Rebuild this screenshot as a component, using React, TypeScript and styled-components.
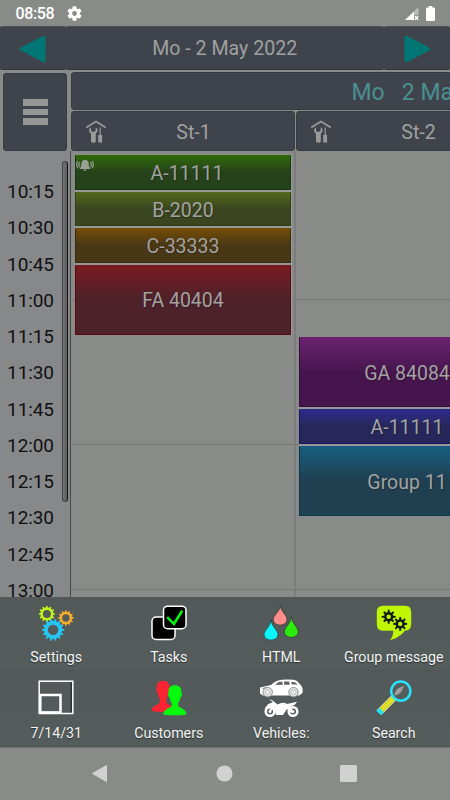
import React from "react";
import styled, { createGlobalStyle } from "styled-components";

const GlobalStyle = createGlobalStyle`
  * { box-sizing: border-box; }
  html, body { margin: 0; padding: 0; }
  body { font-family: Roboto, "Liberation Sans", sans-serif; background: #898b89; overflow: hidden; }
  svg { display: block; flex: none; }
`;

const Screen = styled.div`
  width: 450px;
  height: 800px;
  display: flex;
  flex-direction: column;
  overflow: hidden;
  background: #898b89;
`;

const StatusBar = styled.header`
  height: 26px;
  flex: none;
  display: flex;
  align-items: center;
  padding: 1px 15px 0 15.5px;
  color: #fff;
`;

const Clock = styled.span`
  width: 51px;
  font-size: 16px;
  font-weight: 500;
  letter-spacing: -0.35px;
  line-height: 18px;
`;

const StatusRight = styled.div`
  margin-left: auto;
  display: flex;
  align-items: center;
  gap: 7px;
`;

const DateBar = styled.nav`
  height: 44px;
  flex: none;
  display: grid;
  grid-template-columns: 65.5px 318.5px 1fr;
`;

const DateCell = styled.div`
  background: #3f444c;
  border-radius: 2px;
  border-top: 1px solid #4d5257;
  border-bottom: 1px solid #30343b;
  display: flex;
  align-items: center;
  justify-content: center;
  padding-top: 1px;
  color: #a0a0a0;
  font-size: 19.6px;
  line-height: 24px;
`;

const HeaderArea = styled.div`
  height: 81px;
  flex: none;
  display: flex;
  padding: 2px 0 0 3px;
`;

const MenuButton = styled.div`
  width: 64px;
  height: 78px;
  margin: 1px 4px 0 0;
  flex: none;
  display: flex;
  flex-direction: column;
  gap: 3px;
  align-items: center;
  justify-content: center;
  background: #3f444c;
  border: 1px solid #363a42;
  border-radius: 3px;
`;

const MenuBar = styled.span`
  width: 25px;
  height: 6.5px;
  background: #979797;
`;

const ColumnHeads = styled.div`
  width: 450px;
  flex: none;
  display: flex;
  flex-direction: column;
  gap: 1px;
`;

const DayHead = styled.div`
  height: 38px;
  display: flex;
  align-items: center;
  padding: 2px 0 0 279.5px;
  background: #3f444c;
  border: 1px solid #363a42;
  border-radius: 3px;
  color: #4b8f91;
  font-size: 23px;
  white-space: pre;
`;

const StationRow = styled.div`
  display: flex;
  gap: 1px;
`;

const StationHead = styled.div`
  width: 224px;
  height: 40px;
  display: flex;
  align-items: center;
  padding-left: 13px;
  background: #3f444c;
  border: 1px solid #363a42;
  border-radius: 3px;
  color: #a0a0a0;
  font-size: 19.600px;
`;

const StationName = styled.span`
  flex: 1;
  text-align: center;
  padding-right: 14px;
  padding-top: 2px;
`;

const Schedule = styled.main`
  height: 446px;
  flex: none;
  display: flex;
  overflow: hidden;
`;

const TimeColumn = styled.div`
  width: 61px;
  flex: none;
  padding-top: 23px;
  background: #87888a;
`;

const TimeLabel = styled.div`
  height: 36.25px;
  line-height: 36.25px;
  text-align: center;
  color: #101112;
  font-size: 19px;
  letter-spacing: -0.1px;
`;

const ScrollTrack = styled.div`
  width: 10px;
  flex: none;
  padding: 10px 0 0 0.5px;
  background: linear-gradient(#87888a, #87888a) no-repeat 0 0 / 9px 100%, #464849;
`;

const ScrollThumb = styled.div`
  width: 6.5px;
  height: 341px;
  border-radius: 3px;
  border: 1px solid #444;
  border-right: 1.5px solid #151515;
  background: linear-gradient(90deg, #737475, #5c5d5e);
`;

const Column = styled.div`
  width: 225px;
  flex: none;
  padding-left: 4px;
  border-right: 2px solid #7b7d7c;
  background:
    linear-gradient(#777978, #777978) no-repeat 0 148px / 100% 1px,
    linear-gradient(#777978, #777978) no-repeat 0 293px / 100% 1px,
    linear-gradient(#777978, #777978) no-repeat 0 438px / 100% 1px,
    #898b89;
  & + & { padding-left: 3px; }
`;

const EventStack = styled.div<{ $top: number }>`
  width: 217px;
  margin-top: ${(p) => p.$top}px;
  padding-right: 1px;
  display: flex;
  flex-direction: column;
  gap: 2px;
  background: #979997;
`;

const EventCard = styled.div<{ $h: number; $from: string; $to: string; $edge: string }>`
  height: ${(p) => p.$h}px;
  display: flex;
  align-items: center;
  background: linear-gradient(${(p) => p.$from}, ${(p) => p.$to} 50%, ${(p) => p.$to});
  border: 1px solid ${(p) => p.$edge};
  border-top-color: ${(p) => p.$from};
  color: #a2a2a2;
  font-size: 19.500px;
  text-shadow: 1px 1px 1px rgba(0, 0, 0, 0.25);
`;

const EventName = styled.span`
  flex: 1;
  text-align: center;
  padding-top: 2px;
  white-space: nowrap;
`;

const BellSlot = styled.span`
  width: 8px;
  align-self: flex-start;
  padding: 3px 0 0 0;
  svg { overflow: visible; }
`;

const Toolbox = styled.section`
  height: 151px;
  flex: none;
  display: grid;
  grid-template-columns: repeat(4, 112.5px);
  grid-template-rows: 74px 76px;
  border-bottom: 1px solid #707473;
  background: #525a59;
`;

const Tool = styled.div`
  display: flex;
  flex-direction: column;
  align-items: center;
  padding-top: 8px;
  background: linear-gradient(#525958, #555d5c);
  border-bottom: 1px solid #505756;
  &:nth-child(n + 5) { padding-top: 0; }
`;

const IconBox = styled.span`
  height: 36px;
  ${Tool}:nth-child(n + 5) & {
    height: 46px;
    display: flex;
    align-items: center;
    padding-top: 8px;
  }
`;

const ToolLabel = styled.span`
  margin-top: 8px;
  color: #f4f5f5;
  font-size: 14.2px;
  line-height: 17px;
  white-space: nowrap;
  text-shadow: 0 1px 1px rgba(0, 0, 0, 0.5);
  ${Tool}:nth-child(n + 5) & { margin-top: 8px; }
`;

const SystemNav = styled.footer`
  flex: 1;
  display: flex;
  align-items: center;
  justify-content: space-between;
  padding: 0 93px 1px 91px;
`;

function gearPath(cx: number, cy: number, outer: number, root: number, teeth: number, hole: number) {
  const pts: string[] = [];
  const step = (Math.PI * 2) / teeth;
  for (let i = 0; i < teeth; i++) {
    const a = i * step;
    ([[root, -0.28], [outer, -0.16], [outer, 0.16], [root, 0.28]] as const).forEach(([r, o]) => {
      pts.push(`${(cx + r * Math.cos(a + o * step)).toFixed(2)} ${(cy + r * Math.sin(a + o * step)).toFixed(2)}`);
    });
  }
  return `M${pts.join("L")}Z M${cx - hole} ${cy}a${hole} ${hole} 0 1 0 ${hole * 2} 0a${hole} ${hole} 0 1 0 ${-hole * 2} 0Z`;
}

const StatusGear = () => (
  <svg width="15" height="15" viewBox="2 2 20 20" fill="#fff">
    <path d="M19.14 12.94c.04-.3.06-.61.06-.94 0-.32-.02-.64-.07-.94l2.03-1.58a.49.49 0 0 0 .12-.61l-1.92-3.32a.49.49 0 0 0-.59-.22l-2.39.96a7 7 0 0 0-1.62-.94l-.36-2.54a.48.48 0 0 0-.48-.41h-3.84c-.24 0-.43.17-.47.41l-.36 2.54c-.59.24-1.13.57-1.62.94l-2.39-.96a.48.48 0 0 0-.59.22L2.74 8.87a.47.47 0 0 0 .12.61l2.03 1.58a7 7 0 0 0 0 1.88l-2.03 1.58a.49.49 0 0 0-.12.61l1.92 3.32c.12.22.37.29.59.22l2.39-.96c.5.38 1.03.7 1.62.94l.36 2.54c.05.24.24.41.48.41h3.84c.24 0 .44-.17.47-.41l.36-2.54a7 7 0 0 0 1.62-.94l2.39.96c.22.08.47 0 .59-.22l1.92-3.32a.47.47 0 0 0-.12-.61zM12 15.2a3.2 3.2 0 1 1 0-6.4 3.2 3.2 0 0 1 0 6.4z" />
  </svg>
);

const SignalIcon = () => (
  <svg width="14" height="14" viewBox="0 0 14 14">
    <path d="M13.5 0V8H9v5H.5z" fill="#b9baba" />
    <path d="M9 4.5V13H0z" fill="#fff" />
    <path d="M9.8 9l3.4 3.7M13.2 9l-3.4 3.7" stroke="#fff" strokeWidth="1.4" />
  </svg>
);

const BatteryIcon = () => (
  <svg width="9" height="15" viewBox="0 0 9 15">
    <path d="M2.7 0h3.6v1.5H8a1 1 0 0 1 1 1V14a1 1 0 0 1-1 1H1a1 1 0 0 1-1-1V2.500a1 1 0 0 1 1-1h1.700z" fill="#fff" />
  </svg>
);

const Arrow = ({ right = false }: { right?: boolean }) => (
  <svg width="27" height="28" viewBox="0 0 27 28">
    <path
      d={right ? "M2 2L25 14L2 26Z" : "M25 2V26L2 14Z"}
      fill="#017674"
      stroke="#017674"
      strokeWidth="3"
      strokeLinejoin="round"
    />
  </svg>
);

const GarageIcon = () => (
  <svg width="22" height="23" viewBox="0 0 22 23" fill="#9a9a9a">
    <path d="M1.200 7.500L11 1.600L20.800 7.500" fill="none" stroke="#9a9a9a" strokeWidth="1.7" />
    <path d="M6 7.200v3.500l1.300 1h2l1.300-1V7.200c1.500.8 2.200 2 2 3.600-.1 1.200-.8 2-1.800 2.600v7.800c0 .9-.7 1.500-2.400 1.500s-2.400-.6-2.400-1.500v-7.800c-1.100-.6-1.800-1.500-1.900-2.700C4 9.200 4.700 7.900 6 7.200z" />
    <path d="M14.600 7.600h1.200v7.400h1.300v7.500h-3.900V15h1.400z" />
  </svg>
);

const BellIcon = () => (
  <svg width="18" height="13" viewBox="0 0 18 13" fill="#999f96">
    <path d="M8.200 1.100a.9.900 0 0 1 1.700 0c2.200.5 2.900 2.100 2.900 4.100 0 2 .7 3.400 1.900 4.700H3.400c1.200-1.300 1.900-2.700 1.900-4.700 0-2 .8-3.600 2.900-4.100zM7.300 10.600h3.500a1.800 1.800 0 0 1-3.500 0z" />
    <path d="M3.600 3.200q-1.600 2.300 0 5M1.800 2Q-.5 5.500 1.800 9.200M14.500 3.200q1.600 2.300 0 5M16.200 2q2.300 3.500 0 7.200" fill="none" stroke="#999f96" strokeWidth="1.200" />
  </svg>
);

const SettingsIcon = () => (
  <svg width="36" height="36" viewBox="0 0 36 36" fillRule="evenodd">
    <path d={gearPath(8.900, 8.900, 8, 6.500, 12, 4)} fill="#c0f41b" />
    <path d={gearPath(27.900, 13, 7.700, 6.200, 12, 3.700)} fill="#f8ad2c" />
    <path d={gearPath(15.100, 24.900, 11, 9, 14, 5.200)} fill="#25c5f4" />
  </svg>
);

const TasksIcon = () => (
  <svg width="36" height="36" viewBox="0 0 36 36" stroke="#fff" strokeWidth="1.500">
    <rect x="1" y="12" width="23" height="22.500" rx="4" />
    <rect x="12.500" y="1.200" width="22.500" height="22.500" rx="4" />
    <path d="M16.200 12.200L22.900 18.900L31.200 5.700" fill="none" stroke="#08f512" strokeWidth="2.600" />
  </svg>
);

const DropsIcon = () => (
  <svg width="36" height="36" viewBox="0 0 36 36" stroke="#283033" strokeWidth=".7">
    <path d="M17.300.5C18 7 24 10 24 14.500C24 22 10.300 22 10.300 14.500C10.300 10 16.700 7 17.300.5Z" fill="#ff8d8a" />
    <path d="M8 14.500C8.700 22 15 25 15 29.500C15 37 1 37 1 29.500C1 25 7.300 22 8 14.500Z" fill="#08f5fb" />
    <path d="M28.500 11.500C29.200 19 35.300 22 35.300 26.800C35.300 34.300 21.300 34.300 21.300 26.800C21.300 22 27.800 19 28.500 11.500Z" fill="#2bea0c" />
  </svg>
);

const GroupIcon = () => (
  <svg width="36" height="36" viewBox="0 0 36 36">
    <path d="M7 .8H29Q35.200.8 35.200 7V19Q35.200 25.400 28.800 25.800C25 31 19.800 33.700 13.700 35.200C16.300 32.300 17.400 29.500 17.300 25.800H7Q.8 25.800.8 19V7Q.8.8 7 .8Z" fill="#bef604" />
    <g fill="#111a0b" fillRule="evenodd">
      <path d={gearPath(12.700, 11.800, 7, 4.700, 8, 2.200)} />
      <path d={gearPath(24.200, 18.900, 7, 4.700, 8, 2.200)} />
    </g>
  </svg>
);

const ViewsIcon = () => (
  <svg width="36" height="36" viewBox="0 0 36 36" fill="none" stroke="#fff">
    <path d="M33.200 2V33" stroke="#242b2a" strokeWidth="1.200" />
    <rect x="1.200" y="1.200" width="33.600" height="32.300" strokeWidth="1.500" />
    <rect x="2.300" y="15" width="20.200" height="17.400" strokeWidth="2.500" />
  </svg>
);

const CustomersIcon = () => (
  <svg width="36" height="36" viewBox="0 0 36 36">
    <path d="M12 .8c4.500 0 6.800 3.200 6.300 7.500 1 1 .4 4-.9 4.600-.4 3-1.300 4.700-2.100 5.500v4.300c1.800 2.600 7.800 2.600 8.200 8.500Q12 33 .6 31c.2-5.700 5.900-5.500 8.100-8.300v-4.300c-1-1-1.700-2.700-2-5.500-1.600-.7-1.900-3.300-1-4.600C5.300 4 7.500.8 12 .8z" fill="#fd2432" />
    <path d="M23.900 5.200c4.900 0 7 3.200 6.500 7.600 1.100 1.200.5 3.800-.9 4.500-.4 3-1.300 4.500-2.300 5.500v3.300c2 2.500 7.800 2.600 8.300 8.300q-11.600 1.800-23.200 0c.3-5.600 6.300-5.700 8.400-8.300v-3.300c-1.100-1-1.900-2.500-2.200-5.500-1.600-.7-2-3.300-1-4.500-.5-4.400 1.500-7.600 6.400-7.600z" fill="#05f90c" />
  </svg>
);

const VehiclesIcon = () => (
  <svg width="45" height="38" viewBox="0 0 45 38" fill="#fff">
    <path d="M1 8.500L12 6Q17 1 23 .8Q34 0 38 2L42.500 7Q44.500 10 43.500 14L40 16.500H4L1 14.500Z" />
    <path d="M16 5.800L20 2.700H23.500V6ZM25 2.600H30L31 5.700H25ZM32 2.700L36 3.200L38.800 5.500H33Z" fill="#606665" />
    <path d="M3.500 9.500L8 8.500" stroke="#747b7a" strokeWidth="1" />
    <g fill="#e9ebea" stroke="#8a908f" strokeWidth="1">
      <circle cx="8.700" cy="13.200" r="4.700" />
      <circle cx="34.500" cy="13.200" r="4.700" />
      <circle cx="8.700" cy="13.200" r="2.600" strokeDasharray="1 1" />
      <circle cx="34.500" cy="13.200" r="2.600" strokeDasharray="1 1" />
    </g>
    <g fill="none" stroke="#fff" strokeWidth="2.500">
      <circle cx="11" cy="32.500" r="4.300" />
      <circle cx="34" cy="32.500" r="4.300" />
    </g>
    <path d="M10 20.300L13 21L18.500 25.500Q24 22.500 28 25L38 22.800Q36 27 31.500 27.300L34.500 33L32 34L28 30L24 36H17L15 29.500L10.500 33L9.500 32L13 27.700L5.500 29.800L9 25.200L14 23Z" />
    <circle cx="11" cy="32.500" r="1.500" />
    <circle cx="34" cy="32.500" r="1.500" />
  </svg>
);

const SearchIcon = () => (
  <svg width="36" height="36" viewBox="0 0 36 36" fill="none">
    <path d="M3.300 32.400L18 17.500" stroke="#f5eedb" strokeWidth="6.700" />
    <path d="M3.300 32.400L18 17.500" stroke="#d3d61c" strokeWidth="5.500" />
    <path d="M5 30.800L18 17.500" stroke="#f0f253" strokeWidth="1.500" strokeDasharray="1.500 1" />
    <path d="M2.600 33.100L5.600 30" stroke="#24def5" strokeWidth="6.500" />
    <circle cx="24.800" cy="11.200" r="9.600" fill="#555d5c" stroke="#27e2fa" strokeWidth="2.500" />
    <path d="M18.500 15.500Q19 7.500 28.500 6Q26.500 8 26 10.500Q24 14.500 18.500 15.500Z" fill="#a3a5a4" />
    <path d="M20 14.500Q23.500 11.500 26 7.500" stroke="#858b8a" strokeWidth=".7" />
  </svg>
);

const tools = [
  { label: "Settings", icon: <SettingsIcon /> },
  { label: "Tasks", icon: <TasksIcon /> },
  { label: "HTML", icon: <DropsIcon /> },
  { label: "Group message", icon: <GroupIcon /> },
  { label: "7/14/31", icon: <ViewsIcon /> },
  { label: "Customers", icon: <CustomersIcon /> },
  { label: "Vehicles:", icon: <VehiclesIcon /> },
  { label: "Search", icon: <SearchIcon /> },
];

const times = ["10:15", "10:30", "10:45", "11:00", "11:15", "11:30", "11:45", "12:00", "12:15", "12:30", "12:45", "13:00"];

const columns = [
  {
    top: 4,
    events: [
      { name: "A-11111", h: 35, from: "#2f670a", to: "#25421b", edge: "#123a0c", bell: true },
      { name: "B-2020", h: 34, from: "#52671c", to: "#3b4520", edge: "#2d4213" },
      { name: "C-33333", h: 34.500, from: "#754c06", to: "#483816", edge: "#3a2b0c" },
      { name: "FA 40404", h: 70.500, from: "#791a20", to: "#4d222a", edge: "#5b0712" },
    ],
  },
  {
    top: 186,
    events: [
      { name: "GA 84084", h: 70, from: "#6b2370", to: "#46154d", edge: "#380b40" },
      { name: "A-11111", h: 35, from: "#2c2b8b", to: "#27275b", edge: "#151560" },
      { name: "Group 11", h: 70, from: "#175d80", to: "#203f50", edge: "#083850" },
    ],
  },
];

export default function App() {
  return (
    <>
      <GlobalStyle />
      <Screen>
        <StatusBar>
          <Clock>08:58</Clock>
          <StatusGear />
          <StatusRight>
            <SignalIcon />
            <BatteryIcon />
          </StatusRight>
        </StatusBar>
        <DateBar>
          <DateCell><Arrow /></DateCell>
          <DateCell>Mo - 2 May 2022</DateCell>
          <DateCell><Arrow right /></DateCell>
        </DateBar>
        <HeaderArea>
          <MenuButton><MenuBar /><MenuBar /><MenuBar /></MenuButton>
          <ColumnHeads>
            <DayHead>{"Mo   2 May"}</DayHead>
            <StationRow>
              {["St-1", "St-2"].map((name) => (
                <StationHead key={name}>
                  <GarageIcon />
                  <StationName>{name}</StationName>
                </StationHead>
              ))}
            </StationRow>
          </ColumnHeads>
        </HeaderArea>
        <Schedule>
          <TimeColumn>
            {times.map((t) => <TimeLabel key={t}>{t}</TimeLabel>)}
          </TimeColumn>
          <ScrollTrack><ScrollThumb /></ScrollTrack>
          {columns.map((col) => (
            <Column key={col.top}>
              <EventStack $top={col.top}>
                {col.events.map((e) => (
                  <EventCard key={e.name} $h={e.h} $from={e.from} $to={e.to} $edge={e.edge}>
                    {e.bell && <BellSlot><BellIcon /></BellSlot>}
                    <EventName>{e.name}</EventName>
                  </EventCard>
                ))}
              </EventStack>
            </Column>
          ))}
        </Schedule>
        <Toolbox>
          {tools.map((tool) => (
            <Tool key={tool.label}>
              <IconBox>{tool.icon}</IconBox>
              <ToolLabel>{tool.label}</ToolLabel>
            </Tool>
          ))}
        </Toolbox>
        <SystemNav>
          <svg width="17" height="19" viewBox="0 0 17 19"><path d="M15.500 1.500V17.500L1.500 9.500Z" fill="#d1d1d1" stroke="#d1d1d1" strokeLinejoin="round" /></svg>
          <svg width="17" height="17" viewBox="0 0 17 17"><circle cx="8.500" cy="8.500" r="8" fill="#d1d1d1" /></svg>
          <svg width="17" height="17" viewBox="0 0 17 17"><rect width="17" height="17" rx="1.500" fill="#d1d1d1" /></svg>
        </SystemNav>
      </Screen>
    </>
  );
}
